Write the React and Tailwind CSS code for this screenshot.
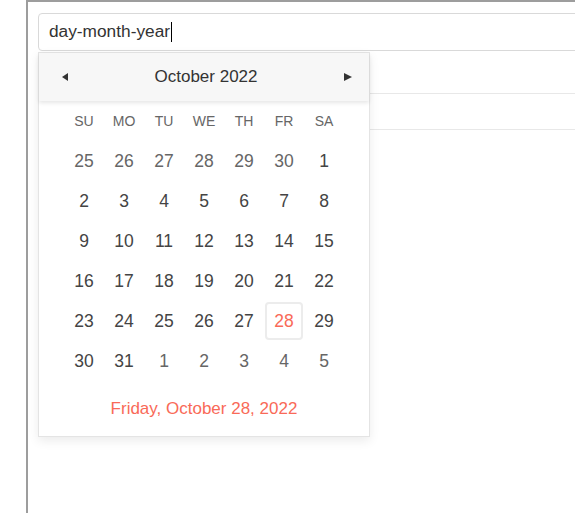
const dayNames = ["SU", "MO", "TU", "WE", "TH", "FR", "SA"];

const weeks = [
  [[25, 0], [26, 0], [27, 0], [28, 0], [29, 0], [30, 0], [1, 1]],
  [[2, 1], [3, 1], [4, 1], [5, 1], [6, 1], [7, 1], [8, 1]],
  [[9, 1], [10, 1], [11, 1], [12, 1], [13, 1], [14, 1], [15, 1]],
  [[16, 1], [17, 1], [18, 1], [19, 1], [20, 1], [21, 1], [22, 1]],
  [[23, 1], [24, 1], [25, 1], [26, 1], [27, 1], [28, 1], [29, 1]],
  [[30, 1], [31, 1], [1, 0], [2, 0], [3, 0], [4, 0], [5, 0]],
];

function Calendar() {
  return (
    <div className="absolute left-[10px] top-[50px] w-[332px] border border-[#e4e4e4] bg-white shadow-[0_4px_10px_rgba(0,0,0,0.08)]">
      <div className="relative z-10 flex h-[48px] items-center justify-between bg-[#f7f7f7] pl-[22px] pr-[16px] shadow-[0_2px_4px_rgba(0,0,0,0.1)]">
        <svg width="8" height="10" viewBox="0 0 8 10">
          <polygon points="7,1 1,5 7,9" fill="#333" />
        </svg>
        <span className="text-[17px] text-[#333]">October 2022</span>
        <svg width="10" height="10" viewBox="0 0 10 10">
          <polygon points="1,1 9,5 1,9" fill="#333" />
        </svg>
      </div>
      <div className="px-[25px]">
        <div className="grid h-[40px] grid-cols-7 items-center text-center text-[14px] text-[#666]">
          {dayNames.map((d) => (
            <span key={d}>{d}</span>
          ))}
        </div>
        {weeks.map((week, i) => (
          <div key={i} className="grid grid-cols-7">
            {week.map(([n, cur], j) => {
              const selected = i === 4 && n === 28;
              return (
                <div key={j} className="flex h-[40px] items-center justify-center">
                  <span
                    className={
                      selected
                        ? "flex h-[38px] w-[38px] items-center justify-center rounded-[4px] border-2 border-[#ececec] text-[17.5px] text-[#f96a58]"
                        : cur
                        ? "text-[17.5px] text-[#444]"
                        : "text-[17.5px] text-[#666]"
                    }
                  >
                    {n}
                  </span>
                </div>
              );
            })}
          </div>
        ))}
      </div>
      <div className="flex h-[55px] items-center justify-center text-[17px] text-[#f96a58]">
        Friday, October 28, 2022
      </div>
    </div>
  );
}

export default function App() {
  return (
    <div className="h-[513px] w-[575px] overflow-hidden bg-white font-['Liberation_Sans',Arial,sans-serif]">
      <div className="relative ml-[26px] h-full border-l-2 border-t-2 border-[#9d9d9d] pl-[10px] pt-[11px]">
        <div className="flex h-[38px] w-[560px] items-center rounded-[4px] border border-[#d9d9d9] pl-[10px] text-[17.3px] text-[#333]">
          day-month-year
          <span className="ml-[1px] inline-block h-[20px] w-px bg-black" />
        </div>
        <div>
          <div className="h-[43px] border-b border-[#e8e8e8]" />
          <div className="h-[36px] border-b border-[#e8e8e8]" />
        </div>
        <Calendar />
      </div>
    </div>
  );
}
